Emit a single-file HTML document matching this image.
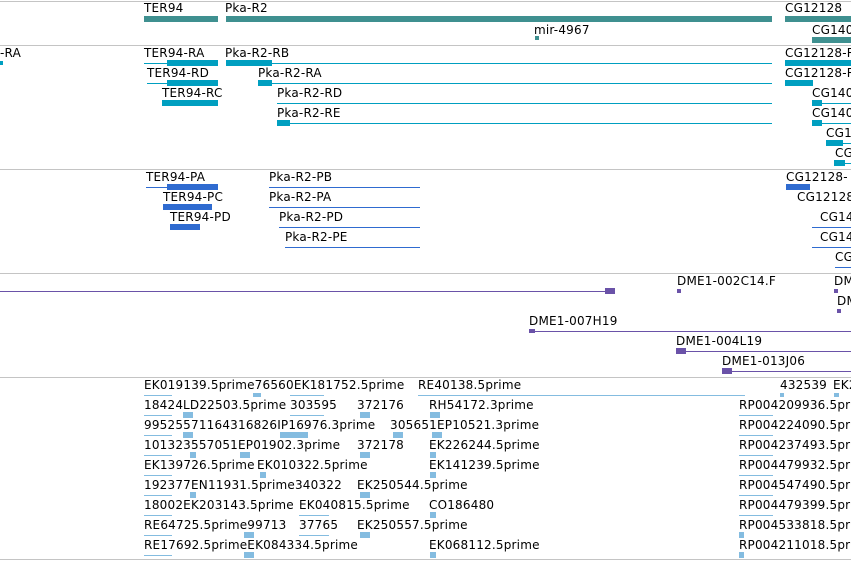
<!DOCTYPE html>
<html><head><meta charset="utf-8"><style>
body{margin:0;width:851px;height:561px;background:#fff;position:relative;overflow:hidden;font-family:"DejaVu Sans","Liberation Sans",sans-serif;font-size:12px;letter-spacing:0.2px;color:#000}
div{position:absolute}
.t{white-space:nowrap;line-height:14px}
.s{left:0;width:851px;height:1px;background:#c4c4c4}
.g{background:#3f9090}
.c{background:#009fc0}
.p{background:#2f6bd0}
.u{background:#6a52a8}
.e{background:#84bce0}
.c.l{height:0;background:none;border-top:1px solid #009fc0}
.p.l{height:0;background:none;border-top:1px solid #2f6bd0}
.u.l{height:0;background:none;border-top:1px solid #6a52a8}
.e.l{height:0;background:none;border-top:1px solid #84bce0}
</style></head><body>
<div class="s" style="top:1px"></div>
<div class="s" style="top:45px"></div>
<div class="s" style="top:169px"></div>
<div class="s" style="top:273px"></div>
<div class="s" style="top:377px"></div>
<div class="s" style="top:559px"></div>

<!-- genes -->
<div class="t" style="left:144px;top:1px">TER94</div>
<div class="t" style="left:225px;top:1px">Pka-R2</div>
<div class="t" style="left:785px;top:1px">CG12128</div>
<div class="g" style="left:144px;top:16px;width:74px;height:6px"></div>
<div class="g" style="left:226px;top:16px;width:546px;height:6px"></div>
<div class="g" style="left:785px;top:16px;width:66px;height:6px"></div>
<div class="t" style="left:534px;top:23px">mir-4967</div>
<div class="g" style="left:535px;top:36px;width:4px;height:4px"></div>
<div class="t" style="left:812px;top:23px">CG140</div>
<div class="g" style="left:812px;top:37px;width:39px;height:6px"></div>

<!-- transcripts -->
<div class="t" style="left:0;top:46px">-RA</div>
<div class="c" style="left:0;top:61px;width:3px;height:4px"></div>
<div class="t" style="left:144px;top:46px">TER94-RA</div>
<div class="c l" style="left:144px;top:63px;width:74px"></div>
<div class="c" style="left:167px;top:60px;width:51px;height:6px"></div>
<div class="t" style="left:225px;top:46px">Pka-R2-RB</div>
<div class="c" style="left:226px;top:60px;width:46px;height:6px"></div>
<div class="c l" style="left:272px;top:63px;width:500px"></div>
<div class="t" style="left:785px;top:46px">CG12128-R</div>
<div class="c" style="left:785px;top:60px;width:66px;height:6px"></div>

<div class="t" style="left:147px;top:66px">TER94-RD</div>
<div class="c l" style="left:147px;top:83px;width:71px"></div>
<div class="c" style="left:167px;top:80px;width:51px;height:6px"></div>
<div class="t" style="left:258px;top:66px">Pka-R2-RA</div>
<div class="c" style="left:258px;top:80px;width:14px;height:6px"></div>
<div class="c l" style="left:272px;top:83px;width:500px"></div>
<div class="t" style="left:785px;top:66px">CG12128-R</div>
<div class="c" style="left:785px;top:80px;width:28px;height:6px"></div>

<div class="t" style="left:162px;top:86px">TER94-RC</div>
<div class="c" style="left:162px;top:100px;width:56px;height:6px"></div>
<div class="t" style="left:277px;top:86px">Pka-R2-RD</div>
<div class="c l" style="left:277px;top:103px;width:495px"></div>
<div class="t" style="left:812px;top:86px">CG140</div>
<div class="c" style="left:812px;top:100px;width:10px;height:6px"></div>
<div class="c l" style="left:822px;top:103px;width:29px"></div>

<div class="t" style="left:277px;top:106px">Pka-R2-RE</div>
<div class="c" style="left:277px;top:120px;width:13px;height:6px"></div>
<div class="c l" style="left:290px;top:123px;width:482px"></div>
<div class="t" style="left:812px;top:106px">CG140</div>
<div class="c" style="left:812px;top:120px;width:10px;height:6px"></div>
<div class="c l" style="left:822px;top:123px;width:29px"></div>
<div class="t" style="left:826px;top:126px">CG1</div>
<div class="c" style="left:826px;top:140px;width:17px;height:6px"></div>
<div class="c l" style="left:843px;top:143px;width:8px"></div>
<div class="t" style="left:835px;top:146px">CG</div>
<div class="c" style="left:834px;top:160px;width:11px;height:6px"></div>
<div class="c l" style="left:845px;top:163px;width:6px"></div>

<!-- proteins -->
<div class="t" style="left:146px;top:170px">TER94-PA</div>
<div class="p l" style="left:146px;top:187px;width:72px"></div>
<div class="p" style="left:167px;top:184px;width:51px;height:6px"></div>
<div class="t" style="left:269px;top:170px">Pka-R2-PB</div>
<div class="p l" style="left:269px;top:187px;width:151px"></div>
<div class="t" style="left:786px;top:170px">CG12128-</div>
<div class="p" style="left:786px;top:184px;width:24px;height:6px"></div>
<div class="t" style="left:163px;top:190px">TER94-PC</div>
<div class="p" style="left:163px;top:204px;width:49px;height:6px"></div>
<div class="t" style="left:269px;top:190px">Pka-R2-PA</div>
<div class="p l" style="left:269px;top:207px;width:151px"></div>
<div class="t" style="left:797px;top:190px">CG12128</div>
<div class="t" style="left:170px;top:210px">TER94-PD</div>
<div class="p" style="left:170px;top:224px;width:30px;height:6px"></div>
<div class="t" style="left:279px;top:210px">Pka-R2-PD</div>
<div class="p l" style="left:279px;top:227px;width:141px"></div>
<div class="t" style="left:820px;top:210px">CG14</div>
<div class="p l" style="left:812px;top:227px;width:39px"></div>
<div class="t" style="left:285px;top:230px">Pka-R2-PE</div>
<div class="p l" style="left:285px;top:247px;width:135px"></div>
<div class="t" style="left:820px;top:230px">CG14</div>
<div class="p l" style="left:812px;top:247px;width:39px"></div>
<div class="t" style="left:835px;top:250px">CG</div>
<div class="p l" style="left:835px;top:267px;width:16px"></div>

<!-- purple -->
<div class="u l" style="left:0;top:291px;width:615px"></div>
<div class="u" style="left:605px;top:288px;width:10px;height:6px"></div>
<div class="t" style="left:677px;top:274px">DME1-002C14.F</div>
<div class="u" style="left:677px;top:289px;width:4px;height:4px"></div>
<div class="t" style="left:834px;top:274px">DM</div>
<div class="u" style="left:834px;top:289px;width:4px;height:4px"></div>
<div class="t" style="left:837px;top:294px">DM</div>
<div class="u" style="left:837px;top:309px;width:4px;height:4px"></div>
<div class="t" style="left:529px;top:314px">DME1-007H19</div>
<div class="u l" style="left:529px;top:331px;width:322px"></div>
<div class="u" style="left:529px;top:329px;width:6px;height:4px"></div>
<div class="t" style="left:676px;top:334px">DME1-004L19</div>
<div class="u l" style="left:676px;top:351px;width:175px"></div>
<div class="u" style="left:676px;top:348px;width:10px;height:6px"></div>
<div class="t" style="left:722px;top:354px">DME1-013J06</div>
<div class="u l" style="left:722px;top:371px;width:129px"></div>
<div class="u" style="left:722px;top:368px;width:10px;height:6px"></div>

<!-- ESTs -->
<div class="t" style="left:144px;top:378px">EK019139.5prime76560EK181752.5prime</div>
<div class="t" style="left:418px;top:378px">RE40138.5prime</div>
<div class="t" style="left:780px;top:378px">432539</div>
<div class="t" style="left:833px;top:378px">EK2</div>
<div class="e l" style="left:144px;top:395px;width:28px"></div>
<div class="e" style="left:253px;top:393px;width:8px;height:4px"></div>
<div class="e l" style="left:290px;top:395px;width:34px"></div>
<div class="e l" style="left:418px;top:395px;width:327px"></div>
<div class="e" style="left:780px;top:393px;width:4px;height:4px"></div>
<div class="e" style="left:834px;top:393px;width:5px;height:4px"></div>

<div class="t" style="left:144px;top:398px">18424</div>
<div class="t" style="left:183px;top:398px">LD22503.5prime</div>
<div class="t" style="left:290px;top:398px">303595</div>
<div class="t" style="left:357px;top:398px">372176</div>
<div class="t" style="left:429px;top:398px">RH54172.3prime</div>
<div class="t" style="left:739px;top:398px">RP004209936.5prime</div>
<div class="e l" style="left:144px;top:415px;width:28px"></div>
<div class="e" style="left:183px;top:412px;width:10px;height:6px"></div>
<div class="e l" style="left:290px;top:415px;width:34px"></div>
<div class="e" style="left:360px;top:412px;width:10px;height:6px"></div>
<div class="e" style="left:430px;top:412px;width:10px;height:6px"></div>
<div class="e l" style="left:739px;top:415px;width:34px"></div>

<div class="t" style="left:144px;top:418px">99525571164316826IP16976.3prime</div>
<div class="t" style="left:390px;top:418px">305651EP10521.3prime</div>
<div class="t" style="left:739px;top:418px">RP004224090.5prime</div>
<div class="e l" style="left:144px;top:435px;width:28px"></div>
<div class="e" style="left:183px;top:432px;width:10px;height:6px"></div>
<div class="e" style="left:280px;top:432px;width:28px;height:6px"></div>
<div class="e" style="left:393px;top:432px;width:10px;height:6px"></div>
<div class="e" style="left:432px;top:432px;width:10px;height:6px"></div>
<div class="e l" style="left:739px;top:435px;width:34px"></div>

<div class="t" style="left:144px;top:438px">101323557051EP01902.3prime</div>
<div class="t" style="left:357px;top:438px">372178</div>
<div class="t" style="left:429px;top:438px">EK226244.5prime</div>
<div class="t" style="left:739px;top:438px">RP004237493.5prime</div>
<div class="e l" style="left:144px;top:455px;width:28px"></div>
<div class="e" style="left:190px;top:452px;width:6px;height:6px"></div>
<div class="e" style="left:240px;top:452px;width:10px;height:6px"></div>
<div class="e" style="left:360px;top:452px;width:10px;height:6px"></div>
<div class="e" style="left:430px;top:452px;width:6px;height:6px"></div>
<div class="e l" style="left:739px;top:455px;width:34px"></div>

<div class="t" style="left:144px;top:458px">EK139726.5prime</div>
<div class="t" style="left:257px;top:458px">EK010322.5prime</div>
<div class="t" style="left:429px;top:458px">EK141239.5prime</div>
<div class="t" style="left:739px;top:458px">RP004479932.5prime</div>
<div class="e l" style="left:144px;top:475px;width:28px"></div>
<div class="e" style="left:260px;top:472px;width:6px;height:6px"></div>
<div class="e" style="left:430px;top:472px;width:6px;height:6px"></div>
<div class="e l" style="left:739px;top:475px;width:34px"></div>

<div class="t" style="left:144px;top:478px">192377EN11931.5prime340322</div>
<div class="t" style="left:357px;top:478px">EK250544.5prime</div>
<div class="t" style="left:739px;top:478px">RP004547490.5prime</div>
<div class="e l" style="left:144px;top:495px;width:28px"></div>
<div class="e" style="left:190px;top:492px;width:6px;height:6px"></div>
<div class="e" style="left:360px;top:492px;width:10px;height:6px"></div>
<div class="e l" style="left:739px;top:495px;width:34px"></div>

<div class="t" style="left:144px;top:498px">18002EK203143.5prime</div>
<div class="t" style="left:299px;top:498px">EK040815.5prime</div>
<div class="t" style="left:429px;top:498px">CO186480</div>
<div class="t" style="left:739px;top:498px">RP004479399.5prime</div>
<div class="e l" style="left:144px;top:515px;width:28px"></div>
<div class="e l" style="left:299px;top:515px;width:30px"></div>
<div class="e" style="left:430px;top:512px;width:6px;height:6px"></div>
<div class="e l" style="left:739px;top:515px;width:34px"></div>

<div class="t" style="left:144px;top:518px">RE64725.5prime99713</div>
<div class="t" style="left:299px;top:518px">37765</div>
<div class="t" style="left:357px;top:518px">EK250557.5prime</div>
<div class="t" style="left:739px;top:518px">RP004533818.5prime</div>
<div class="e l" style="left:144px;top:535px;width:28px"></div>
<div class="e" style="left:244px;top:532px;width:10px;height:6px"></div>
<div class="e l" style="left:299px;top:535px;width:30px"></div>
<div class="e" style="left:360px;top:532px;width:10px;height:6px"></div>
<div class="e" style="left:739px;top:532px;width:5px;height:6px"></div>

<div class="t" style="left:144px;top:538px">RE17692.5primeEK084334.5prime</div>
<div class="t" style="left:429px;top:538px">EK068112.5prime</div>
<div class="t" style="left:739px;top:538px">RP004211018.5prime</div>
<div class="e l" style="left:144px;top:555px;width:28px"></div>
<div class="e" style="left:244px;top:552px;width:10px;height:6px"></div>
<div class="e" style="left:430px;top:552px;width:6px;height:6px"></div>
<div class="e" style="left:739px;top:552px;width:5px;height:6px"></div>
</body></html>
